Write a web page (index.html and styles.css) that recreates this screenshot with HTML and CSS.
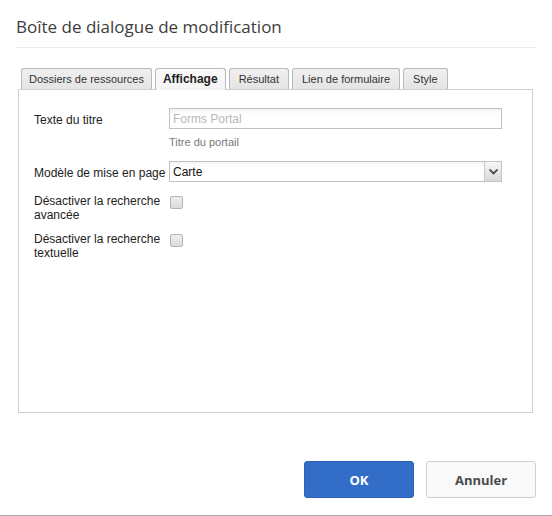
FILE: index.html
```html
<!DOCTYPE html>
<html lang="fr">
<head>
<meta charset="utf-8">
<title>Boîte de dialogue de modification</title>
<link rel="stylesheet" href="styles.css">
</head>
<body>
<div class="dialog">
  <div class="header">
    <h1 class="title">Boîte de dialogue de modification</h1>
  </div>
  <div class="body">
    <div class="tabs">
      <div class="tab">Dossiers de ressources</div>
      <div class="tab active">Affichage</div>
      <div class="tab">Résultat</div>
      <div class="tab">Lien de formulaire</div>
      <div class="tab">Style</div>
    </div>
    <div class="panel">
      <div class="form">
        <div class="row row-text">
          <label class="label">Texte du titre</label>
          <div class="field">
            <div class="input"><span class="placeholder">Forms Portal</span></div>
            <div class="help">Titre du portail</div>
          </div>
        </div>
        <div class="row row-select">
          <label class="label">Modèle de mise en page</label>
          <div class="field">
            <div class="select">
              <span class="select-value">Carte</span>
              <span class="trigger">
                <svg width="9" height="6" viewBox="0 0 9 6"><path d="M0.5 0.5 L4.5 4.5 L8.5 0.5" fill="none" stroke="#4a4a4a" stroke-width="1.8"/></svg>
              </span>
            </div>
          </div>
        </div>
        <div class="row row-check">
          <label class="label">Désactiver la recherche avancée</label>
          <div class="field"><span class="checkbox"></span></div>
        </div>
        <div class="row row-check">
          <label class="label">Désactiver la recherche textuelle</label>
          <div class="field"><span class="checkbox"></span></div>
        </div>
      </div>
    </div>
  </div>
  <div class="footer">
    <button class="btn btn-primary">OK</button>
    <button class="btn btn-secondary">Annuler</button>
  </div>
</div>
</body>
</html>
```

FILE: styles.css
```css
html, body {
  margin: 0;
  padding: 0;
  background: #ffffff;
}

.dialog {
  width: 552px;
  height: 515px;
  border-bottom: 1px solid #a9a9a9;
  display: flex;
  flex-direction: column;
  font-family: "Liberation Sans", Arial, sans-serif;
  color: #222;
}

.header {
  margin: 0 16px;
  height: 48px;
  box-sizing: border-box;
  border-bottom: 1px solid #ececec;
}

.title {
  margin: 0;
  padding-top: 15px;
  font-family: "Open Sans", sans-serif;
  font-weight: 400;
  font-size: 17px;
  line-height: 24px;
  color: #3d3d3d;
}

.body {
  padding: 20px 19px 0 18px;
}

.tabs {
  display: flex;
  gap: 2px;
  margin-left: 3px;
  height: 21px;
  position: relative;
  z-index: 1;
}

.tab {
  box-sizing: border-box;
  height: 21px;
  padding: 0 9px;
  border: 1px solid #b9b9b9;
  border-bottom: none;
  border-radius: 3px 3px 0 0;
  background: linear-gradient(#f0f0f0, #e4e4e4);
  font-size: 11px;
  line-height: 21px;
  color: #333;
  white-space: nowrap;
}

.tab:first-child {
  padding: 0 7px;
}

.tab + .tab {
  margin-left: 1px;
}

.tab.active {
  background: linear-gradient(#fafafa, #f4f4f4);
  height: 22px;
  font-weight: bold;
  font-size: 12px;
  color: #222;
  padding: 0 7px;
}

.panel {
  height: 324px;
  box-sizing: border-box;
  border: 1px solid #cfcfcf;
  background: #fff;
}

.form {
  padding: 18px 30px 0 15px;
}

.row {
  display: grid;
  grid-template-columns: 135px 1fr;
}

.label {
  font-size: 12px;
  line-height: 14px;
  color: #222;
}

.row-text .label {
  padding-top: 5px;
}

.input,
.select {
  height: 21px;
  box-sizing: border-box;
  border: 1px solid #c2c2c2;
  background: linear-gradient(#f3f3f3, #ffffff 5px);
  font-size: 12px;
  line-height: 19px;
}

.input {
  padding: 1px 0 0 3px;
}

.placeholder {
  color: #b8b8b8;
}

.help {
  margin-top: 6px;
  font-size: 11px;
  line-height: 14px;
  color: #7a7a7a;
}

.row-select {
  margin-top: 12px;
}

.row-select .label {
  padding-top: 5px;
}

.select {
  display: flex;
  justify-content: space-between;
  padding-left: 3px;
  color: #111;
}

.select-value {
  padding-top: 1px;
}

.trigger {
  width: 16px;
  height: 19px;
  border-left: 1px solid #c8c8c8;
  background: linear-gradient(#f7f7f7, #d9d9d9);
  display: flex;
  align-items: center;
  justify-content: center;
}

.row-check {
  margin-top: 12px;
}

.row-check + .row-check {
  margin-top: 10px;
}

.row-check .label {
  padding-right: 8px;
}

.checkbox {
  display: block;
  margin: 2px 0 0 1px;
  width: 11px;
  height: 11px;
  border: 1px solid #b4b4b4;
  border-radius: 2px;
  background: linear-gradient(#eeeeee, #dcdcdc);
}

.footer {
  margin-top: auto;
  display: flex;
  justify-content: flex-end;
  gap: 12px;
  padding: 0 16px 17px;
}

.btn {
  width: 110px;
  height: 37px;
  border-radius: 3px;
  font-family: "Open Sans", sans-serif;
  font-weight: 700;
  font-size: 13px;
  cursor: pointer;
}

.btn-primary {
  background: #326ec8;
  border: 1px solid #2b63b8;
  color: #fff;
}

.btn-secondary {
  background: #f9f9f9;
  border: 1px solid #d0d0d0;
  color: #4b4b4b;
}
```
